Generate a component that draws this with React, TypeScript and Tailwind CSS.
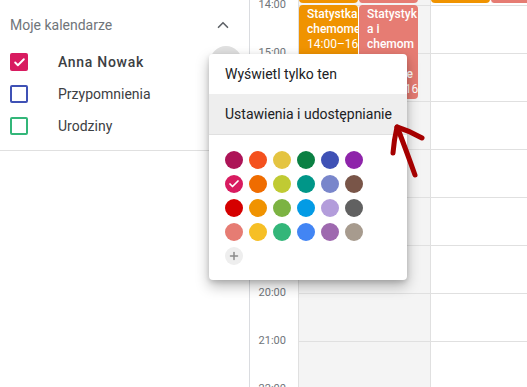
import React from 'react';
import { Check, ChevronUp, Plus } from 'lucide-react';

const hours = ['13:00', '14:00', '15:00', '16:00', '17:00', '18:00', '19:00', '20:00', '21:00', '22:00', '23:00'];

const palette = [
  ['#ad1457', '#f4511e', '#e4c441', '#0b8043', '#3f51b5', '#8e24aa'],
  ['#d81b60', '#ef6c00', '#c0ca33', '#009688', '#7986cb', '#795548'],
  ['#d50000', '#f09300', '#7cb342', '#039be5', '#b39ddb', '#616161'],
  ['#e67c73', '#f6bf26', '#33b679', '#4285f4', '#9e69af', '#a79b8e'],
];

const calendars = [
  { name: 'Anna Nowak', color: '#d81b60', checked: true },
  { name: 'Przypomnienia', color: '#3f51b5', checked: false },
  { name: 'Urodziny', color: '#33b679', checked: false },
];

const Sidebar: React.FC = () => (
  <aside className="w-[250px] shrink-0 border-r border-[#dadce0] h-full">
    <div className="h-[46px] pt-1 flex items-center justify-between pl-[10px] pr-[17px]">
      <span className="text-[14px] text-[#70757a]">Moje kalendarze</span>
      <ChevronUp className="w-[18px] h-[18px] text-[#5f6368]" strokeWidth={2.2} />
    </div>
    <div className="pb-2 border-b border-[#e0e0e0]">
      {calendars.map((cal, i) => (
        <div key={cal.name} className="h-8 flex items-center pl-[10px]">
          {cal.checked ? (
            <span
              className="w-[18px] h-[18px] rounded-[2px] flex items-center justify-center"
              style={{ backgroundColor: cal.color }}
            >
              <Check className="w-[13px] h-[13px] text-white" strokeWidth={3.5} />
            </span>
          ) : (
            <span className="w-[18px] h-[18px] rounded-[2px] border-2" style={{ borderColor: cal.color }} />
          )}
          <span className={`ml-[30px] text-[14px] text-[#3c4043] ${i === 0 ? 'font-medium tracking-[0.7px]' : ''}`}>{cal.name}</span>
          {i === 0 && <span className="ml-auto mr-[7px] w-8 h-8 rounded-full bg-[#e0e0e0]" />}
        </div>
      ))}
    </div>
  </aside>
);

const TimeColumn: React.FC = () => (
  <div className="w-[48px] shrink-0 h-full overflow-hidden">
    <div className="mt-[-67px]">
      {hours.map((h) => (
        <div key={h} className="h-12 flex items-center justify-end pr-3 text-[11px] text-[#70757a]">
          {h}
        </div>
      ))}
    </div>
  </div>
);

const HourRows: React.FC = () => (
  <div className="mt-[-43px]">
    {hours.map((h) => (
      <div key={h} className="h-12 border-t border-[#e0e0e0]" />
    ))}
  </div>
);

const EventBlock: React.FC<{ color: string; left: number; width: number; top: number; height: number; title?: string[]; time?: string; divider?: boolean }> = ({
  color,
  left,
  width,
  top,
  height,
  title = [],
  time,
  divider,
}) => (
  <div
    className={`absolute rounded-[4px] overflow-hidden text-white text-[12px] leading-[15px] pt-[2px] pl-2 ${divider ? 'border-l border-white' : ''}`}
    style={{ backgroundColor: color, left, width, top, height }}
  >
    {title.map((t) => (
      <div key={t} className="whitespace-nowrap font-medium">
        {t}
      </div>
    ))}
    {time && <div className="whitespace-nowrap">{time}</div>}
  </div>
);

const DayColumns: React.FC = () => (
  <div className="flex-1 flex h-full">
    <div className="relative w-[132px] shrink-0 border-l border-[#e0e0e0] bg-[#f4f4f4] overflow-hidden">
      <HourRows />
      <EventBlock color="#f09300" left={0} width={59} top={-40} height={43} />
      <EventBlock color="#e67c73" left={59} width={60} top={-40} height={43} divider />
      <EventBlock color="#f09300" left={0} width={59} top={5} height={94} title={['Statystka', 'chemometria']} time="14:00–16:00" />
      <EventBlock
        color="#e67c73"
        left={59}
        width={60}
        top={5}
        height={94}
        title={['Statystyk', 'a i', 'chemom', 'etria w', 'praktyce']}
        time="14:00–16:00"
        divider
      />
    </div>
    <div className="relative flex-1 border-l border-[#e0e0e0] bg-white overflow-hidden">
      <HourRows />
      <EventBlock color="#f09300" left={0} width={59} top={-40} height={43} />
      <EventBlock color="#e67c73" left={59} width={60} top={-40} height={43} divider />
    </div>
  </div>
);

const ColorMenu: React.FC = () => (
  <div className="absolute left-[209px] top-[54px] w-[198px] bg-white rounded-[4px] shadow-[0_6px_14px_rgba(0,0,0,0.28),0_2px_5px_rgba(0,0,0,0.14)]">
    <div className="h-10 flex items-center px-4 text-[14px] text-[#202124] whitespace-nowrap">Wyświetl tylko ten</div>
    <div className="h-10 flex items-center px-4 text-[14px] text-[#202124] bg-[#eeeeee] whitespace-nowrap">Ustawienia i udostępnianie</div>
    <div className="border-t border-[#e0e0e0] pt-4 pl-4 pb-[15px]">
      <div className="grid grid-cols-6 gap-[6px] w-fit">
        {palette.flat().map((c) => (
          <span key={c} className="w-[18px] h-[18px] rounded-full flex items-center justify-center" style={{ backgroundColor: c }}>
            {c === '#d81b60' && <Check className="w-3 h-3 text-white" strokeWidth={3.5} />}
          </span>
        ))}
        <span className="w-[18px] h-[18px] rounded-full bg-[#eeeeee] flex items-center justify-center">
          <Plus className="w-3 h-3 text-[#8a8a8a]" strokeWidth={3} />
        </span>
      </div>
    </div>
  </div>
);

const Arrow: React.FC = () => (
  <svg className="absolute left-[385px] top-[120px]" width="45" height="62" viewBox="0 0 45 62" fill="none">
    <g stroke="#a50000" strokeWidth="5" strokeLinecap="round" strokeLinejoin="round">
      <path d="M12 7 Q9 20 8 33" />
      <path d="M12 7 Q25 11 37 18" />
      <path d="M13 9 Q21 30 30 55" />
    </g>
  </svg>
);

export default function App() {
  return (
    <div className="relative w-[527px] h-[387px] overflow-hidden bg-white flex font-['Roboto','Liberation_Sans',sans-serif]">
      <Sidebar />
      <TimeColumn />
      <DayColumns />
      <ColorMenu />
      <Arrow />
    </div>
  );
}
